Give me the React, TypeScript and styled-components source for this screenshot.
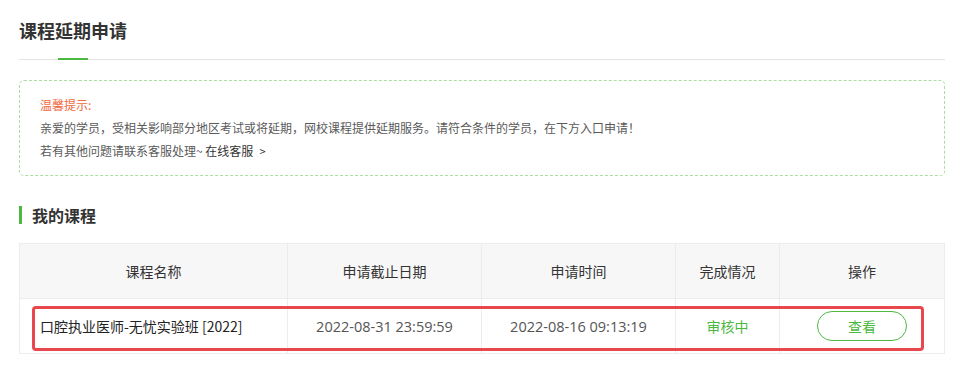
import React from 'react'
import styled, { createGlobalStyle } from 'styled-components'

const green = '#4cb83f'

const GlobalStyle = createGlobalStyle`
  body {
    margin: 0;
    background: #fff;
    font-family: "Noto Sans CJK SC", "Noto Sans", sans-serif;
    color: #333;
  }
`

type Course = {
  name: string
  deadline: string
  appliedAt: string
  status: string
}

const courses: Course[] = [
  {
    name: '口腔执业医师-无忧实验班 [2022]',
    deadline: '2022-08-31 23:59:59',
    appliedAt: '2022-08-16 09:13:19',
    status: '审核中',
  },
]

export default function App() {
  return (
    <Page>
      <GlobalStyle />
      <TitleBar>
        <Title>课程延期申请</Title>
        <TabMark />
      </TitleBar>

      <Notice>
        <NoticeTitle>温馨提示:</NoticeTitle>
        <NoticeLine>亲爱的学员，受相关影响部分地区考试或将延期，网校课程提供延期服务。请符合条件的学员，在下方入口申请！</NoticeLine>
        <NoticeLine>
          若有其他问题请联系客服处理~ <ServiceLink>在线客服<Arrow>&gt;</Arrow></ServiceLink>
        </NoticeLine>
      </Notice>

      <SectionTitle>我的课程</SectionTitle>

      <TableWrap>
        <Table>
          <colgroup>
            <col style={{ width: 268 }} />
            <col style={{ width: 194 }} />
            <col style={{ width: 194 }} />
            <col style={{ width: 104 }} />
            <col />
          </colgroup>
          <thead>
            <tr>
              <Th>课程名称</Th>
              <Th>申请截止日期</Th>
              <Th>申请时间</Th>
              <Th>完成情况</Th>
              <Th>操作</Th>
            </tr>
          </thead>
          <tbody>
            {courses.map((c) => (
              <tr key={c.name}>
                <NameCell>{c.name}</NameCell>
                <DateCell>{c.deadline}</DateCell>
                <DateCell>{c.appliedAt}</DateCell>
                <StatusCell>{c.status}</StatusCell>
                <Td>
                  <ViewButton>查看</ViewButton>
                </Td>
              </tr>
            ))}
          </tbody>
        </Table>
        <Highlight />
      </TableWrap>
    </Page>
  )
}

const Page = styled.div`
  padding: 0 18px 30px 19px;
`

const TitleBar = styled.div`
  position: relative;
  height: 59px;
  border-bottom: 1px solid #e3e3e3;
`

const Title = styled.h1`
  margin: 0;
  padding-top: 18px;
  font-size: 18px;
  line-height: 24px;
  font-weight: bold;
  color: #333;
`

const TabMark = styled.div`
  position: absolute;
  left: 39px;
  bottom: -1px;
  width: 30px;
  height: 2px;
  background: ${green};
`

const Notice = styled.div`
  margin-top: 20px;
  padding: 12px 20px;
  border: 1px dashed #acdca2;
  border-radius: 5px;
  font-size: 12px;
  line-height: 23px;
  color: #5a5a5a;
`

const NoticeTitle = styled.div`
  color: #f2693f;
`

const NoticeLine = styled.div``

const ServiceLink = styled.span`
  color: #333;
  font-weight: normal;
  cursor: pointer;
`

const Arrow = styled.span`
  margin-left: 6px;
  font-size: 11px;
`

const SectionTitle = styled.h2`
  margin: 30px 0 0;
  height: 18px;
  line-height: 18px;
  padding-left: 10px;
  border-left: 3px solid ${green};
  font-size: 16px;
  font-weight: bold;
  color: #333;
`

const TableWrap = styled.div`
  position: relative;
  margin-top: 19px;
`

const Table = styled.table`
  width: 100%;
  border-collapse: collapse;
  table-layout: fixed;
  font-size: 14px;
`

const Th = styled.th`
  height: 54px;
  padding: 0;
  border: 1px solid #ececec;
  background: #f7f7f7;
  font-weight: normal;
  color: #333;
  text-align: center;
`

const Td = styled.td`
  height: 54px;
  padding: 0;
  border: 1px solid #ececec;
  color: #555;
  text-align: center;
`

const NameCell = styled(Td)`
  text-align: left;
  padding-left: 20px;
  color: #222;
`

const DateCell = styled(Td)`
  font-family: "Open Sans", "Noto Sans CJK SC", sans-serif;
  font-size: 14.5px;
`

const StatusCell = styled(Td)`
  color: ${green};
`

const ViewButton = styled.button`
  width: 90px;
  height: 30px;
  border: 1px solid ${green};
  border-radius: 15px;
  background: #fff;
  color: ${green};
  font-family: inherit;
  font-size: 14px;
  cursor: pointer;
`

const Highlight = styled.div`
  position: absolute;
  left: 13px;
  top: 63px;
  width: 892px;
  height: 45px;
  box-sizing: border-box;
  border: 3px solid #e8474d;
  border-radius: 4px;
  pointer-events: none;
`
